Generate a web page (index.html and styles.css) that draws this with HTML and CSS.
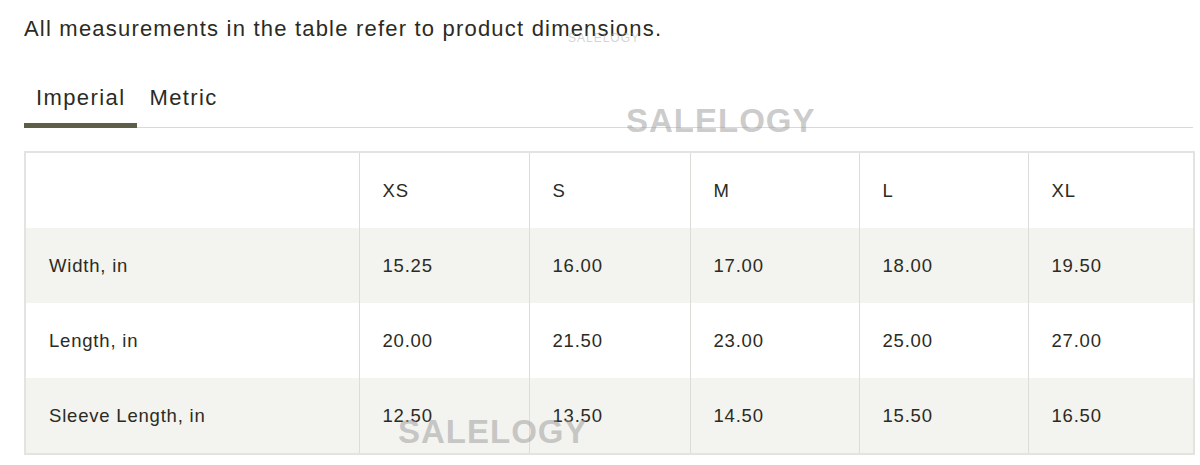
FILE: index.html
```html
<!DOCTYPE html>
<html>
<head>
<meta charset="utf-8">
<link rel="stylesheet" href="styles.css">
</head>
<body>
<div class="page">
  <p class="intro">All measurements in the table refer to product dimensions.</p>
  <div class="tabs">
    <div class="tab active">Imperial</div>
    <div class="tab">Metric</div>
  </div>
  <table class="sizes">
    <colgroup>
      <col class="c0"><col class="c1"><col class="c2"><col class="c3"><col class="c4"><col class="c5">
    </colgroup>
    <tr><td></td><td>XS</td><td>S</td><td>M</td><td>L</td><td>XL</td></tr>
    <tr class="alt"><td>Width, in</td><td>15.25</td><td>16.00</td><td>17.00</td><td>18.00</td><td>19.50</td></tr>
    <tr><td>Length, in</td><td>20.00</td><td>21.50</td><td>23.00</td><td>25.00</td><td>27.00</td></tr>
    <tr class="alt"><td>Sleeve Length, in</td><td>12.50</td><td>13.50</td><td>14.50</td><td>15.50</td><td>16.50</td></tr>
  </table>
  <div class="wm wm-small">SALELOGY</div>
  <div class="wm wm-top">SALELOGY</div>
  <div class="wm wm-bottom">SALELOGY</div>
</div>
</body>
</html>
```
FILE: styles.css
```css
html, body { margin: 0; padding: 0; background: #fff; }
.page {
  position: relative;
  padding: 14px 7px 0 24px;
  font-family: "Liberation Sans", Arial, sans-serif;
  color: #2b2b24;
}
.intro {
  margin: 0;
  font-size: 22px;
  line-height: 30px;
  letter-spacing: 1.2px;
}
.tabs {
  display: flex;
  margin-top: 40px;
  border-bottom: 1px solid #d9d9d6;
}
.tab {
  padding: 0 12px 12px;
  font-size: 22px;
  line-height: 27px;
  letter-spacing: 1.4px;
  margin-bottom: -1px;
  border-bottom: 5px solid transparent;
}
.tab.active { border-bottom-color: #5d5d48; }
.sizes {
  margin-top: 23px;
  border-collapse: collapse;
  table-layout: fixed;
  width: 1169px;
  border: 2px solid #e3e3e0;
  font-size: 18.5px;
  letter-spacing: 0.8px;
}
.c0 { width: 334px; }
.c1 { width: 170px; }
.c2 { width: 161px; }
.c3 { width: 169px; }
.c4 { width: 169px; }
.c5 { width: 166px; }
.sizes td {
  height: 75px;
  padding: 0 0 0 23px;
  border-left: 1px solid #dcdcd8;
  vertical-align: middle;
}
.sizes tr.alt td { background: #f3f3ef; }
.wm {
  position: absolute;
  font-family: "Liberation Sans", Arial, sans-serif;
  font-weight: bold;
  color: rgba(160,160,160,0.55);
  letter-spacing: 1px;
}
.wm-top { left: 626px; top: 102px; font-size: 33px; }
.wm-bottom { left: 398px; top: 413px; font-size: 33px; }
.wm-small { left: 568px; top: 31px; font-size: 12px; color: rgba(170,170,170,0.5); font-weight: normal; }
```
